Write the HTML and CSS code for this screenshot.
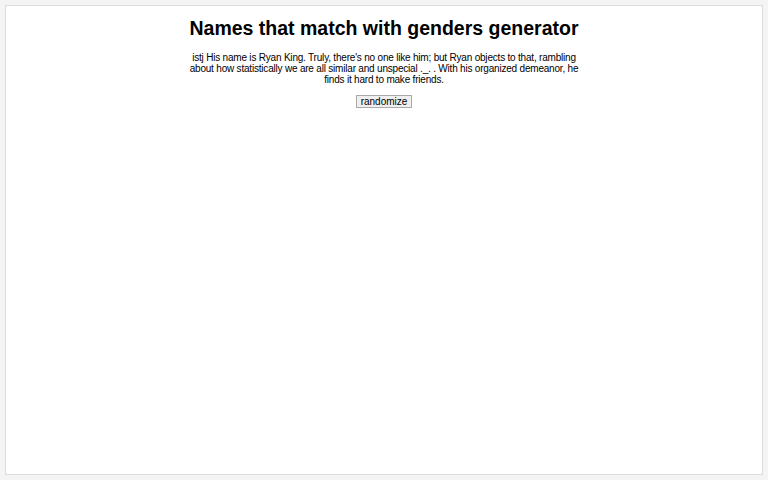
FILE: index.html
```html
<!DOCTYPE html>
<html>
<head>
<meta charset="utf-8">
<link rel="stylesheet" href="styles.css">
</head>
<body>
<div class="card">
  <h1 class="title">Names that match with genders generator</h1>
  <p class="text">istj His name is Ryan King. Truly, there's no one like him; but Ryan objects to that, rambling about how statistically we are all similar and unspecial ._. . With his organized demeanor, he finds it hard to make friends.</p>
  <button class="btn">randomize</button>
</div>
</body>
</html>
```
FILE: styles.css
```css
html, body {
  margin: 0;
  padding: 0;
  background: #f4f4f4;
}
body {
  padding: 5px;
  font-family: "Liberation Sans", Arial, sans-serif;
  color: #000;
}
.card {
  background: #fff;
  border: 1px solid #dcdcdc;
  box-sizing: border-box;
  height: 470px;
  display: flex;
  flex-direction: column;
  align-items: center;
  padding-top: 11px;
}
.title {
  font-size: 19.5px;
  font-weight: bold;
  margin: 0 0 13px 0;
  line-height: 22px;
}
.text {
  font-size: 10px;
  letter-spacing: -0.2px;
  line-height: 11px;
  width: 400px;
  text-align: center;
  margin: 0 0 10px 0;
}
.btn {
  font-family: "Liberation Sans", Arial, sans-serif;
  font-size: 10px;
  line-height: 11px;
  padding: 0 4px;
  background: #efefef;
  border: 1px solid #a9a9a9;
  border-radius: 0;
  color: #000;
}
```
